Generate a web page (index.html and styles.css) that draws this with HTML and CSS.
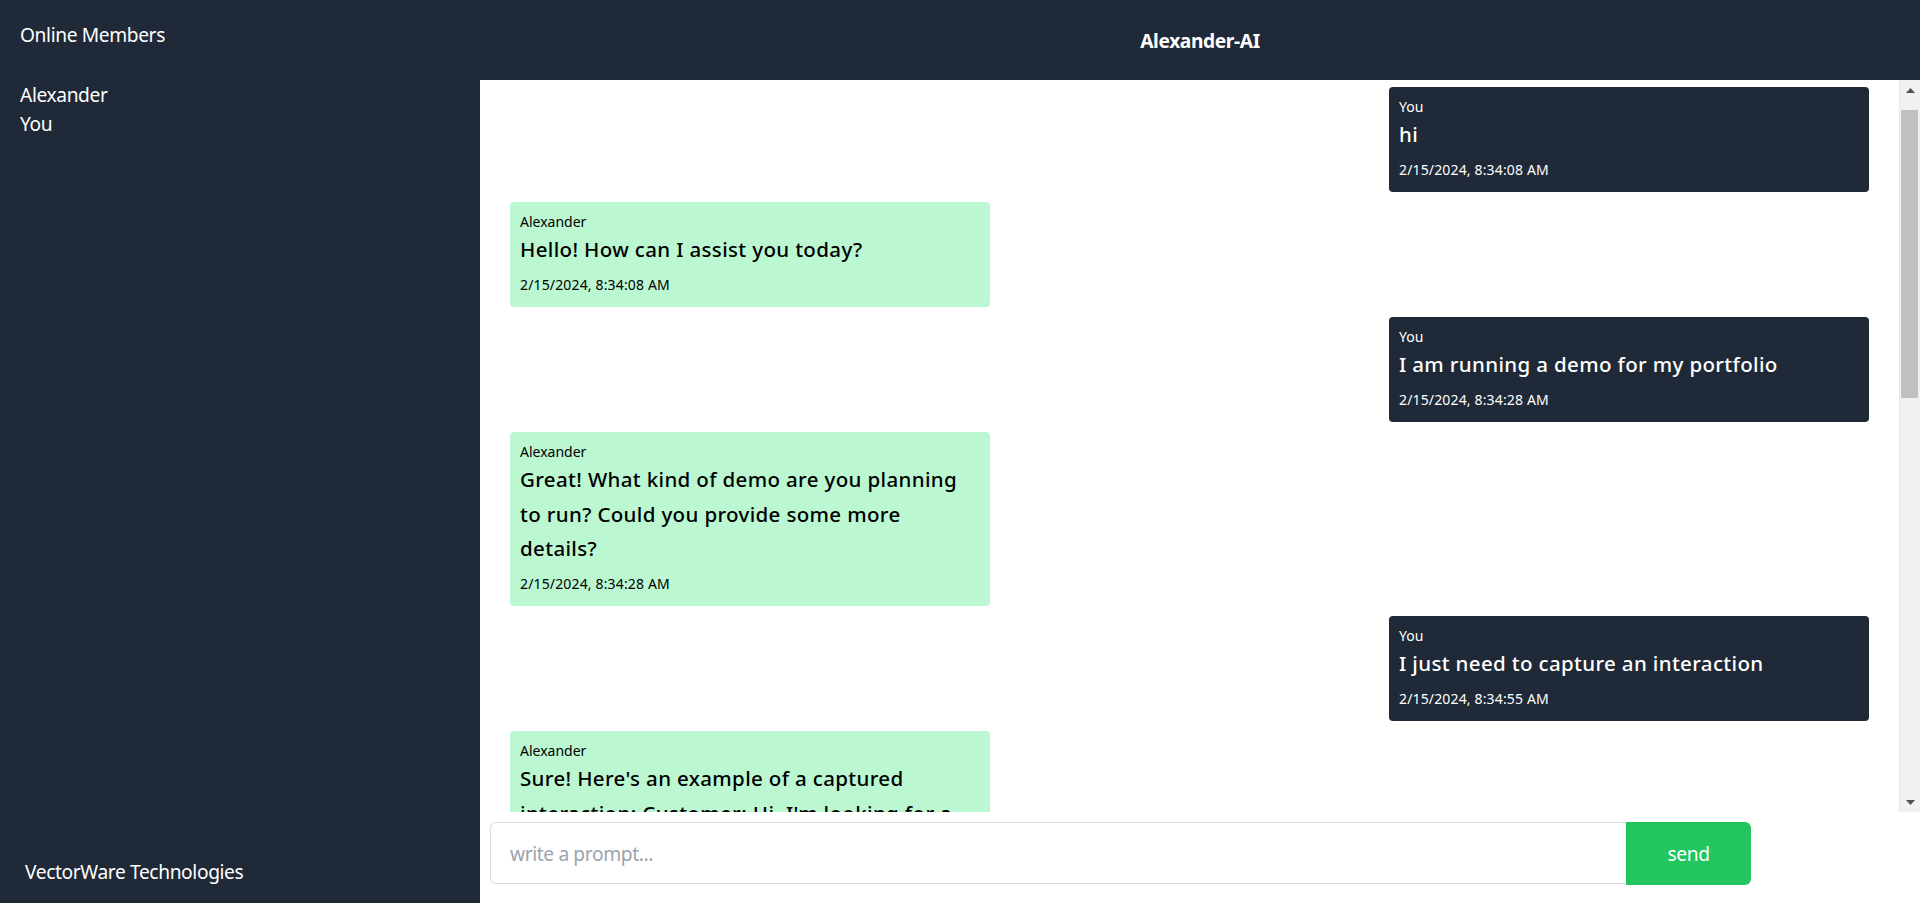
FILE: index.html
```html
<!DOCTYPE html>
<html lang="en">
<head>
<meta charset="utf-8">
<title>Alexander-AI</title>
<link rel="stylesheet" href="styles.css">
</head>
<body>
<div class="app">
  <aside class="sidebar">
    <div class="sidebar-head">Online Members</div>
    <ul class="members">
      <li>Alexander</li>
      <li>You</li>
    </ul>
    <div class="brand">VectorWare Technologies</div>
  </aside>
  <main class="chat">
    <header class="chat-head">Alexander-AI</header>
    <div class="chat-body">
      <section class="messages">
        <div class="msg msg-user">
          <div class="msg-name">You</div>
          <div class="msg-text">hi</div>
          <div class="msg-time">2/15/2024, 8:34:08 AM</div>
        </div>
        <div class="msg msg-bot">
          <div class="msg-name">Alexander</div>
          <div class="msg-text">Hello! How can I assist you today?</div>
          <div class="msg-time">2/15/2024, 8:34:08 AM</div>
        </div>
        <div class="msg msg-user">
          <div class="msg-name">You</div>
          <div class="msg-text">I am running a demo for my portfolio</div>
          <div class="msg-time">2/15/2024, 8:34:28 AM</div>
        </div>
        <div class="msg msg-bot">
          <div class="msg-name">Alexander</div>
          <div class="msg-text">Great! What kind of demo are you planning to run? Could you provide some more details?</div>
          <div class="msg-time">2/15/2024, 8:34:28 AM</div>
        </div>
        <div class="msg msg-user">
          <div class="msg-name">You</div>
          <div class="msg-text">I just need to capture an interaction</div>
          <div class="msg-time">2/15/2024, 8:34:55 AM</div>
        </div>
        <div class="msg msg-bot">
          <div class="msg-name">Alexander</div>
          <div class="msg-text">Sure! Here's an example of a captured interaction: Customer: Hi, I'm looking for a new laptop for work. Can you help me? Alexander: Of course! I'd be happy to help you find the right laptop. What kind of work will you mostly be doing on it? Customer: Mainly spreadsheets, video calls and a bit of light photo editing. Alexander: Great, in that case I'd recommend something with at least 16GB of RAM, a fast SSD and a good quality webcam. Do you have a preferred screen size or budget in mind? Customer: Something around 14 inches, under $1,200. Alexander: Perfect. Would you like me to compare a few models for you? Customer: Yes, please. Alexander: You're welcome! Let me know if you need anything else.</div>
          <div class="msg-time">2/15/2024, 8:35:02 AM</div>
        </div>
      </section>
      <div class="scrollbar" aria-hidden="true">
        <div class="sb-btn">
          <svg width="9" height="5" viewBox="0 0 9 5"><path d="M4.5 0L9 5H0z" fill="#505050"/></svg>
        </div>
        <div class="sb-track">
          <div class="sb-thumb"></div>
        </div>
        <div class="sb-btn">
          <svg width="9" height="5" viewBox="0 0 9 5"><path d="M0 0H9L4.5 5z" fill="#505050"/></svg>
        </div>
      </div>
    </div>
    <form class="composer">
      <input class="prompt" type="text" placeholder="write a prompt..." autofocus>
      <button class="send" type="button">send</button>
    </form>
  </main>
</div>
</body>
</html>
```
FILE: styles.css
```css
html, body {
  margin: 0;
  height: 100%;
}

body {
  font-family: "Noto Sans", "Open Sans", sans-serif;
}

.app {
  display: grid;
  grid-template-columns: 480px 1fr;
  height: 100vh;
}

.sidebar {
  background: #1f2937;
  color: #ffffff;
  display: flex;
  flex-direction: column;
  font-size: 19.2px;
  line-height: 28.8px;
  letter-spacing: -0.02em;
}

.sidebar-head {
  height: 80px;
  box-sizing: border-box;
  padding: 21px 20px 0;
}

.members {
  list-style: none;
  margin: 0;
  padding: 1px 20px 0;
}

.brand {
  margin-top: auto;
  padding: 0 25px 16px;
}

.chat {
  display: flex;
  flex-direction: column;
  min-width: 0;
  height: 100vh;
}

.chat-head {
  flex: 0 0 80px;
  background: #1f2937;
  color: #ffffff;
  font-weight: 700;
  font-size: 19.2px;
  letter-spacing: -0.02em;
  display: flex;
  align-items: center;
  justify-content: center;
}

.chat-body {
  flex: 1 1 auto;
  min-height: 0;
  display: flex;
}

.messages {
  flex: 1 1 auto;
  min-width: 0;
  overflow: hidden;
  padding: 7px 30px 7px 30px;
  display: flex;
  flex-direction: column;
  gap: 10px;
}

.scrollbar {
  flex: 0 0 21px;
  display: flex;
  flex-direction: column;
  background: #f1f1f1;
  box-shadow: inset 1px 0 0 #e8e8e8;
}

.sb-btn {
  flex: 0 0 20px;
  display: flex;
  align-items: center;
  justify-content: center;
  padding-left: 1px;
}

.sb-btn svg {
  display: block;
}

.sb-track {
  flex: 1 1 auto;
  padding: 10px 2px 0;
}

.sb-thumb {
  height: 288px;
  background: #c1c1c1;
}

.msg {
  flex-shrink: 0;
  width: 480px;
  box-sizing: border-box;
  padding: 10px 10px 12.5px;
  border-radius: 4px;
}

.msg-user {
  align-self: flex-end;
  background: #1f2937;
  color: #ffffff;
}

.msg-bot {
  align-self: flex-start;
  background: #bbf7d0;
  color: #000000;
}

.msg-name {
  font-size: 14px;
  line-height: 20px;
}

.msg-text {
  font-size: 20.5px;
  line-height: 34.5px;
  font-weight: 500;
  letter-spacing: 0.35px;
}

.msg-time {
  font-size: 14px;
  line-height: 20px;
  margin-top: 8px;
  letter-spacing: 0.15px;
}

.composer {
  flex: 0 0 91px;
  box-sizing: border-box;
  margin: 0;
  padding: 10px 0 0 10px;
  display: flex;
  align-items: flex-start;
}

.prompt {
  width: 1136px;
  height: 62px;
  box-sizing: border-box;
  border: 1px solid #dcdcdc;
  border-right: none;
  border-radius: 6px 0 0 6px;
  padding: 0 19px;
  font-family: inherit;
  font-size: 19.2px;
  letter-spacing: -0.02em;
  color: #111827;
  caret-color: #000000;
  outline: none;
}

.prompt::placeholder {
  color: #9ca3af;
}

.send {
  width: 125px;
  height: 63px;
  border: none;
  border-radius: 0 6px 6px 0;
  background: #22c55e;
  color: #ffffff;
  font-family: inherit;
  font-size: 19.2px;
  letter-spacing: -0.02em;
  cursor: pointer;
}
```
